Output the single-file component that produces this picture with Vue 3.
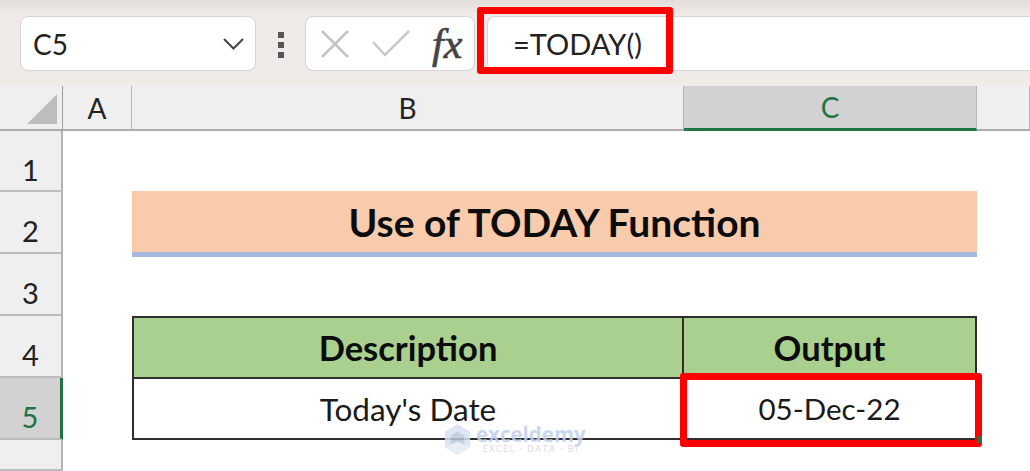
<script setup>
const rows = [1, 2, 3, 4, 5, 6];
</script>

<template>
    <div class="screen">
        <div class="toolbar">
            <div class="name-box">
                <span>C5</span>
                <svg width="24" height="14" viewBox="0 0 24 14"><path d="M2 2 L11.500 11.500 L21 2" fill="none" stroke="#444" stroke-width="2" /></svg>
            </div>
            <div class="grip"><i></i><i></i><i></i></div>
            <div class="fx-box">
                <svg width="30" height="30" viewBox="0 0 30 30"><path d="M2 2 L28 28 M28 2 L2 28" fill="none" stroke="#c4c4c4" stroke-width="2.500" /></svg>
                <svg width="38" height="28" viewBox="0 0 38 28"><path d="M1 12 L13 25 L37 1" fill="none" stroke="#c9c9c9" stroke-width="2.500" /></svg>
                <span class="fx">fx</span>
            </div>
            <div class="formula">
                <span>=TODAY()</span>
                <div class="red-box formula-mark"></div>
            </div>
        </div>

        <div class="sheet">
            <div class="corner"><span class="triangle"></span></div>
            <div class="col-head">A</div>
            <div class="col-head">B</div>
            <div class="col-head active">C</div>
            <div class="col-head"></div>

            <template v-for="r in rows" :key="r">
                <div class="row-head" :class="{ active: r === 5 }">{{ r }}</div>
                <div class="cell"></div>
                <div v-if="r === 2" class="cell title">Use of TODAY Function</div>
                <div v-else-if="r === 4" class="cell head first">Description</div>
                <div v-else-if="r === 5" class="cell body first">Today's Date</div>
                <div v-else class="cell wide"></div>
                <div v-if="r === 4" class="cell head last">Output</div>
                <div v-else-if="r === 5" class="cell body last date">05-Dec-22</div>
                <div v-else-if="r !== 2" class="cell"></div>
                <div class="cell"></div>
            </template>

            <div class="red-box output-mark"></div>
            <span class="fill-handle"></span>

            <div class="watermark">
                <svg width="27" height="31" viewBox="0 0 26 32">
                    <path d="M13 0 L26 8 L26 24 L13 32 L0 24 L0 8 Z" fill="#d9e2f5" />
                    <path d="M13 8 L20 12 L20 22 L13 18 L6 22 L6 12 Z" fill="#bcc6d8" />
                    <path d="M0 24 L13 18 L26 24 L13 32 Z" fill="#e6ebf3" />
                </svg>
                <div class="mark-text">
                    <span class="mark-name">exceldemy</span>
                    <span class="mark-sub">EXCEL · DATA · BI</span>
                </div>
            </div>
        </div>
    </div>
</template>

<style scoped>
.screen {
    width: 1030px;
    height: 471px;
    overflow: hidden;
    background: #fff;
    font-family: Lato, "Liberation Sans", sans-serif;
    color: #111;
}

.toolbar {
    height: 86px;
    box-sizing: border-box;
    padding: 16px 0 0 20px;
    display: flex;
    align-items: flex-start;
    background: linear-gradient(#e3dedc 0, #efeae8 14px, #f0ebe9 100%);
}

.name-box,
.fx-box,
.formula {
    height: 55px;
    box-sizing: border-box;
    background: #fff;
    border: 1px solid #d6d3d2;
    display: flex;
    align-items: center;
}

.name-box {
    width: 236px;
    border-radius: 8px;
    padding: 0 9px 0 12px;
    justify-content: space-between;
    font-size: 28px;
    color: #222;
}

.grip {
    width: 49px;
    display: flex;
    flex-direction: column;
    align-items: center;
    gap: 4px;
    padding-top: 16px;
}

.grip i {
    width: 6px;
    height: 6px;
    background: #555;
}

.fx-box {
    width: 170px;
    border-radius: 8px;
    padding: 0 8px 0 14px;
    gap: 22px;
}

.fx {
    font-family: "Liberation Serif", serif;
    font-style: italic;
    font-size: 42px;
    color: #444;
    line-height: 1;
    -webkit-text-stroke: 0.7px #444;
}

.formula {
    flex: 1;
    position: relative;
    margin-left: 12px;
    border-right: none;
    border-radius: 8px 0 0 8px;
    padding-left: 25px;
    font-size: 29px;
    color: #222;
}

.red-box {
    position: absolute;
    box-sizing: border-box;
    border: 7px solid #f00;
    border-radius: 3px;
}

.formula-mark {
    left: -11px;
    top: -10px;
    width: 196px;
    height: 67px;
}

.sheet {
    position: relative;
    display: grid;
    grid-template-columns: 63px 69px 552px 293px 53px;
    grid-template-rows: 45px 61px 62px 62px 62px 62px 31px;
    height: 385px;
}

.corner,
.col-head {
    background: #efefef;
    border-right: 1px solid #b5b5b5;
    border-bottom: 2px solid #acacac;
    display: flex;
    align-items: center;
    justify-content: center;
    font-size: 28px;
    color: #222;
    box-sizing: border-box;
}

.corner {
    border-right: 1px solid #9e9e9e;
    justify-content: flex-end;
    align-items: flex-end;
    padding: 0 5px 5px 0;
}

.triangle {
    width: 30px;
    height: 30px;
    background: #bdbdbd;
    clip-path: polygon(100% 0, 100% 100%, 0 100%);
}

.col-head.active {
    background: #d2d2d2;
    border-bottom: 3px solid #217346;
    color: #217346;
}

.row-head {
    background: #efefef;
    border-right: 2px solid #b5b5b5;
    border-bottom: 2px solid #bdbdbd;
    box-sizing: border-box;
    overflow: hidden;
    padding-top: 22px;
    text-align: center;
    font-size: 29px;
    line-height: 34px;
    color: #222;
}

.row-head.active {
    background: #d2d2d2;
    border-right: 3px solid #217346;
    color: #217346;
}

.cell {
    min-width: 0;
    background: #fff;
}

.title {
    grid-column: span 2;
    position: relative;
    z-index: 1;
    margin: -1px 0 -3px;
    background: #f8cbad;
    border-bottom: 5px solid #a4b8e0;
    box-sizing: border-box;
    display: flex;
    align-items: center;
    justify-content: center;
    font-size: 39px;
    font-weight: bold;
    color: #0c0c0c;
}

.head,
.body {
    box-sizing: border-box;
    display: flex;
    align-items: center;
    justify-content: center;
    border-right: 2px solid #2e2e2e;
}

.head {
    background: #a9d08e;
    border-top: 2px solid #2e2e2e;
    border-bottom: 1px solid #2e2e2e;
    font-size: 34.500px;
    font-weight: bold;
    color: #0c0c0c;
}

.body {
    border-top: 1px solid #2e2e2e;
    border-bottom: 2px solid #2e2e2e;
    font-size: 31.500px;
    color: #1a1a1a;
}

.date {
    font-size: 29.500px;
}

.first {
    border-left: 2px solid #2e2e2e;
}

.output-mark {
    left: 680px;
    top: 287px;
    width: 302px;
    height: 74px;
}

.fill-handle {
    position: absolute;
    left: 977px;
    top: 350px;
    width: 5px;
    height: 7px;
    background: #217346;
}

.watermark {
    position: absolute;
    left: 444px;
    top: 338px;
    display: flex;
    align-items: center;
    gap: 5px;
    opacity: 0.85;
}

.mark-text {
    display: flex;
    flex-direction: column;
    line-height: 1;
}

.mark-name {
    font-family: "Open Sans", sans-serif;
    font-size: 20.500px;
    font-weight: bold;
    color: #c3cfee;
    margin-top: -2px;
}

.mark-sub {
    font-family: "Open Sans", sans-serif;
    font-size: 9px;
    letter-spacing: 1.500px;
    color: #d4d4d4;
    text-align: center;
}
</style>
